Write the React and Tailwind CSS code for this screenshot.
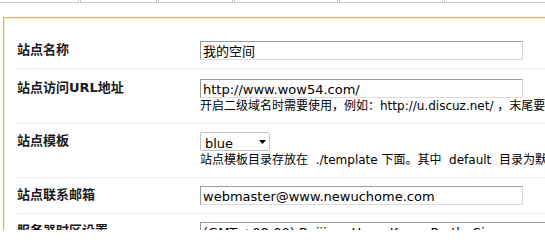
export default function App() {
  const font = "font-['DejaVu_Sans','Noto_Sans_CJK_SC',sans-serif]";
  const inputCls =
    "h-[19px] border border-t-[#9a9a9a] border-l-[#9a9a9a] border-r-[#d4d4d4] border-b-[#dcdcdc] bg-white px-[2px] pt-[2px] text-[13px] leading-[15px] text-black whitespace-nowrap overflow-hidden";
  const labelCls = "w-[183px] shrink-0 text-[13px] leading-[16px] font-bold text-[#1a1a1a] whitespace-nowrap";
  return (
    <div className={`w-[545px] h-[230px] overflow-hidden bg-white ${font}`}>
      {/* tab strip (cut off) */}
      <div className="flex gap-[1px] h-[3px]">
        <div className="ml-[-10px] w-[89px] h-[3px] border-r border-b border-[#c6c6c6] bg-white shrink-0" />
        <div className="w-[77px] h-[3px] border-x border-b border-[#c6c6c6] bg-white shrink-0" />
        <div className="w-[75px] h-[3px] border-x border-b border-[#c6c6c6] bg-white shrink-0" />
        <div className="w-[104px] h-[3px] border-x border-b border-[#c6c6c6] bg-white shrink-0" />
        <div className="w-[104px] h-[3px] border-x border-b border-[#c6c6c6] bg-white shrink-0" />
        <div className="w-[110px] h-[3px] border-x border-b border-[#c6c6c6] bg-white shrink-0" />
      </div>

      {/* settings box */}
      <div className="mt-[14px] ml-[3px] w-[620px] border border-[#e2a962] shadow-[inset_1px_1px_0_#fdf0cc] bg-white pt-[15px] pl-[13px]">
        {/* row 1 */}
        <div className="flex border-b border-[#eeeeee] py-2">
          <div className={`${labelCls} mt-[1px]`}>站点名称</div>
          <div className={`${inputCls} w-[323px]`}>我的空间</div>
        </div>
        {/* row 2 */}
        <div className="flex border-b border-[#eeeeee] pt-[10px] pb-2">
          <div className={`${labelCls} mt-[1px]`}>站点访问URL地址</div>
          <div className="flex flex-col">
            <div className={`${inputCls} w-[323px]`}>http://www.wow54.com/</div>
            <div className="text-[12px] leading-[17px] text-black whitespace-nowrap">
              开启二级域名时需要使用，例如：http://u.discuz.net/ ，末尾要加 /
            </div>
          </div>
        </div>
        {/* row 3 */}
        <div className="flex border-b border-[#eeeeee] py-2">
          <div className={`${labelCls} mt-[1px]`}>站点模板</div>
          <div className="flex flex-col">
            <div className="relative w-[70px] h-[19px] border border-[#c2c2c2] rounded-[2px] bg-white pl-[4px] pt-[3px] text-[13px] leading-[15px] text-black">
              blue
              <svg className="absolute right-[3px] top-[7px]" width="7" height="4" viewBox="0 0 7 4">
                <polygon points="0,0 7,0 3.5,4" fill="#000" />
              </svg>
            </div>
            <div className="text-[12px] leading-[18px] text-black whitespace-pre">
              {"站点模板目录存放在  ./template 下面。其中  default  目录为默认模板目录"}
            </div>
          </div>
        </div>
        {/* row 4 */}
        <div className="flex border-b border-[#eeeeee] py-2">
          <div className={`${labelCls} mt-[1px]`}>站点联系邮箱</div>
          <div className={`${inputCls} w-[323px]`}>webmaster@www.newuchome.com</div>
        </div>
        {/* row 5 */}
        <div className="flex border-b border-[#eeeeee] py-2">
          <div className={`${labelCls} mt-[1px]`}>服务器时区设置</div>
          <div className={`${inputCls} w-[400px]`}>(GMT +08:00) Beijing, Hong Kong, Perth, Singapore, Taipei</div>
        </div>
      </div>
    </div>
  );
}
